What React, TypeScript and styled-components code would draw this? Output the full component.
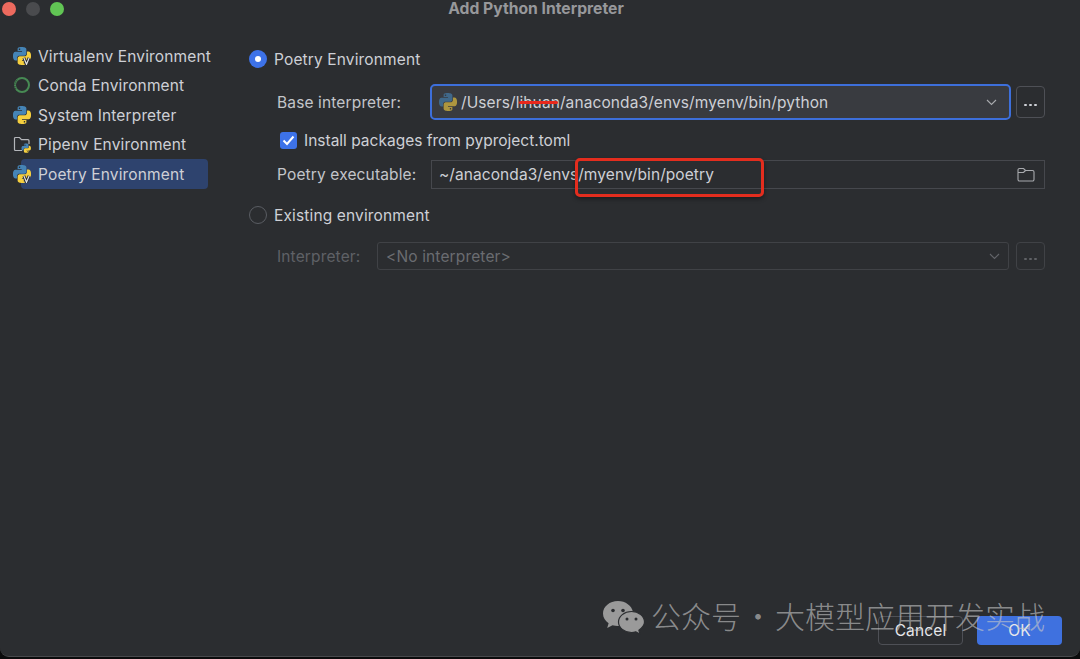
import React from "react";
import styled, { createGlobalStyle } from "styled-components";

const Global = createGlobalStyle`
  html, body { margin: 0; padding: 0; background: #0b0b0c; }
  body { font-family: Inter, "Noto Sans", sans-serif; }
  * { box-sizing: border-box; }
`;

const Page = styled.div`
  width: 1080px;
  height: 659px;
  overflow: hidden;
  position: relative;
  background: #0b0b0c;
`;
const Dialog = styled.div`
  height: 657px;
  display: flex;
  flex-direction: column;
  background: #2b2d30;
  border-bottom: 1.5px solid #48494c;
  border-radius: 0 0 9px 9px;
  color: #ced0d6;
  font-size: 15.5px;
  letter-spacing: 0.14px;
  -webkit-font-smoothing: antialiased;
`;
const TitleBar = styled.div`
  height: 17px;
  flex: none;
  display: flex;
  align-items: center;
  position: relative;
  padding-left: 2px;
  gap: 10px;
`;
const Light = styled.span<{ $c: string }>`
  width: 14px;
  height: 14px;
  border-radius: 50%;
  background: ${(p) => p.$c};
  flex: none;
`;
const Title = styled.div`
  position: absolute;
  left: 0;
  right: 0;
  margin-left: -8px;
  text-align: center;
  font-size: 15.7px;
  font-weight: 700;
  color: #97989b;
  top: 0;
  line-height: 17px;
  letter-spacing: 0;
`;
const Main = styled.div`
  flex: 1;
  display: flex;
  min-height: 0;
`;
const Sidebar = styled.div`
  width: 249px;
  flex: none;
  padding-top: 24px;
`;
const NavRow = styled.div<{ $sel?: boolean }>`
  height: 29.5px;
  display: flex;
  align-items: center;
  gap: 7px;
  padding-left: 13px;
  position: relative;
  z-index: 0;
  &::before {
    content: "";
    display: ${(p) => (p.$sel ? "block" : "none")};
    position: absolute;
    left: 21px;
    width: 187px;
    top: 0;
    bottom: 0;
    border-radius: 4px;
    background: #2e436e;
    z-index: -1;
  }
`;
const NavText = styled.span`
  padding-top: 1px;
`;
const NavIcon = styled.svg`
  width: 18px;
  height: 18px;
  flex: none;
`;
const Content = styled.div`
  flex: 1;
  padding: 30px 35px 0 0;
  display: flex;
  flex-direction: column;
`;
const RadioRow = styled.div<{ $mt?: number }>`
  height: 24px;
  margin-top: ${(p) => p.$mt ?? 0}px;
  display: flex;
  align-items: center;
  gap: 7px;
`;
const Radio = styled.span<{ $on?: boolean }>`
  width: 18px;
  height: 18px;
  border-radius: 50%;
  flex: none;
  display: flex;
  align-items: center;
  justify-content: center;
  background: ${(p) => (p.$on ? "#3d72e8" : "transparent")};
  border: ${(p) => (p.$on ? "none" : "1.5px solid #5a5d63")};
  &::after {
    content: "";
    display: ${(p) => (p.$on ? "block" : "none")};
    width: 6px;
    height: 6px;
    border-radius: 50%;
    background: #fff;
  }
`;
const FormRow = styled.div<{ $mt?: number; $h: number }>`
  height: ${(p) => p.$h}px;
  margin-top: ${(p) => p.$mt ?? 0}px;
  padding-left: 28px;
  display: flex;
  align-items: center;
  gap: 5px;
`;
const Label = styled.span<{ $w: number; $dim?: boolean }>`
  width: ${(p) => p.$w}px;
  flex: none;
  color: ${(p) => (p.$dim ? "#5f6166" : "#c3c5ca")};
`;
const Combo = styled.div`
  flex: 1;
  height: 36px;
  border: 2px solid #3d6fdb;
  border-radius: 5px;
  background: #393b40;
  display: flex;
  align-items: center;
  padding: 0 12px 0 7px;
  gap: 4px;
`;
const PathText = styled.span`
  flex: 1;
  white-space: nowrap;
  position: relative;
  letter-spacing: 0.1px;
`;
const Strike = styled.span`
  position: absolute;
  left: 58px;
  top: 8px;
  width: 39px;
  height: 3px;
  background: #e8281c;
  border-radius: 2px;
`;
const DotsBtn = styled.div<{ $dim?: boolean }>`
  width: 29px;
  height: ${(p) => (p.$dim ? 28 : 32)}px;
  flex: none;
  border: 1px solid ${(p) => (p.$dim ? "#404246" : "#4e5056")};
  border-radius: 4px;
  display: flex;
  align-items: center;
  justify-content: center;
  gap: 2.5px;
  padding-top: 6px;
`;
const Dot = styled.i<{ $dim?: boolean }>`
  width: 2.5px;
  height: 2.5px;
  border-radius: 50%;
  background: ${(p) => (p.$dim ? "#606266" : "#ced0d6")};
`;
const CheckRow = styled.div`
  height: 23px;
  margin-top: 8px;
  padding: 1px 0 0 31px;
  display: flex;
  align-items: center;
  gap: 7px;
  letter-spacing: 0;
`;
const Check = styled.span`
  width: 17px;
  height: 17px;
  flex: none;
  border-radius: 3px;
  background: #3d72e8;
  display: flex;
  align-items: center;
  justify-content: center;
`;
const PlainField = styled.div`
  flex: 1;
  height: 29px;
  border: 1px solid #46484d;
  display: flex;
  align-items: center;
  justify-content: space-between;
  padding: 0 9px 0 7px;
  letter-spacing: 0.08px;
`;
const DimField = styled.div`
  flex: 1;
  height: 28px;
  margin-right: 2px;
  border: 1px solid #404246;
  border-radius: 3px;
  display: flex;
  align-items: center;
  justify-content: space-between;
  padding: 0 8px;
  color: #6a6c71;
`;
const Footer = styled.div`
  flex: none;
  height: 29px;
  margin-bottom: 11px;
  padding-right: 18px;
  display: flex;
  justify-content: flex-end;
  gap: 14px;
`;
const Btn = styled.div<{ $primary?: boolean }>`
  width: 85px;
  height: 29px;
  border-radius: 4px;
  display: flex;
  align-items: center;
  justify-content: center;
  color: #e6e7ea;
  background: ${(p) => (p.$primary ? "#3f71df" : "transparent")};
  border: ${(p) => (p.$primary ? "none" : "1px solid #4e5056")};
`;
const RedBox = styled.div`
  position: absolute;
  left: 575px;
  top: 158px;
  width: 189px;
  height: 39px;
  border: 3px solid #e32d1e;
  border-radius: 5px;
  box-shadow: 0 2px 4px rgba(0, 0, 0, 0.4);
`;
const Watermark = styled.div`
  position: absolute;
  left: 603px;
  top: 596px;
  display: flex;
  align-items: center;
  gap: 6px;
  color: rgba(200, 200, 200, 0.62);
  font-family: "Noto Sans CJK SC", sans-serif;
  font-weight: 300;
  font-size: 30px;
  line-height: 38px;
  white-space: nowrap;
`;
const MarkText = styled.span`
  padding-bottom: 4px;
`;
const MarkDot = styled.span`
  margin: 0 2px;
`;

const BLUE_P =
  "M14.25.18l.9.2.73.26.59.3.45.32.34.34.25.34.16.33.1.3.04.26.02.2-.01.13V8.5l-.05.63-.13.55-.21.46-.26.38-.3.31-.33.25-.35.19-.35.14-.33.1-.3.07-.26.04-.21.02H8.77l-.69.05-.59.14-.5.22-.41.27-.33.32-.27.35-.2.36-.15.37-.1.35-.07.32-.04.27-.02.21v3.06H3.17l-.21-.03-.28-.07-.32-.12-.35-.18-.36-.26-.36-.36-.35-.46-.32-.59-.28-.73-.21-.88-.14-1.05-.05-1.23.06-1.22.16-1.04.24-.87.32-.71.36-.57.4-.44.42-.33.42-.24.4-.16.36-.1.32-.05.24-.01h.16l.06.01h8.16v-.83H6.18l-.01-2.75-.02-.37.05-.34.11-.31.17-.28.25-.26.31-.23.38-.2.44-.18.51-.15.58-.12.64-.1.71-.06.77-.04.84-.02 1.27.05zm-6.3 1.98l-.23.33-.08.41.08.41.23.34.33.22.41.09.41-.09.33-.22.23-.34.08-.41-.08-.41-.23-.33-.33-.22-.41-.09-.41.09z";
const YELLOW_P =
  "M21.04 6.11l.28.06.32.12.35.18.36.27.36.35.35.47.32.59.28.73.21.88.14 1.04.05 1.23-.06 1.23-.16 1.04-.24.86-.32.71-.36.57-.4.45-.42.33-.42.24-.4.16-.36.09-.32.05-.24.02-.16-.01h-8.22v.82h5.84l.01 2.76.02.36-.05.34-.11.31-.17.29-.25.25-.31.24-.38.2-.44.17-.51.15-.58.13-.64.09-.71.07-.77.04-.84.01-1.27-.04-1.07-.14-.9-.2-.73-.25-.59-.3-.45-.33-.34-.34-.25-.34-.16-.33-.1-.3-.04-.25-.02-.2.01-.13v-5.34l.05-.64.13-.54.21-.46.26-.38.3-.32.33-.24.35-.2.35-.14.33-.1.3-.06.26-.04.21-.02.13-.01h5.84l.69-.05.59-.14.5-.21.41-.28.33-.32.27-.35.2-.36.15-.36.1-.35.07-.32.04-.28.02-.21V6.07h2.09l.14.01zm-6.47 14.25l-.23.33-.08.41.08.41.23.33.33.23.41.08.41-.08.33-.23.23-.33.08-.41-.08-.41-.23-.33-.33-.23-.41-.08-.41.08z";

const Snake = ({ dim }: { dim?: boolean }) => (
  <g fillRule="evenodd" opacity={dim ? 0.62 : 1}>
    <path d={BLUE_P} fill="#4584b6" />
    <path d={YELLOW_P} fill="#f5cf3f" />
  </g>
);

const PyIcon = ({ v, dim }: { v?: boolean; dim?: boolean }) => (
  <NavIcon viewBox="0 0 24 24">
    <Snake dim={dim} />
    {v && (
      <>
        <path d="M14.5 14.5l3.5 8.5 3.5-8.5" fill="none" stroke="#2b2d30" strokeWidth="4" />
        <path d="M14.5 14.5l3.5 8.5 3.5-8.5" fill="none" stroke="#e4e5e8" strokeWidth="1.6" />
      </>
    )}
  </NavIcon>
);

const CondaIcon = () => (
  <NavIcon viewBox="0 0 18 18">
    <circle cx="9" cy="9" r="7" fill="none" stroke="#478a54" strokeWidth="2" />
    <path d="M3 13A7 7 0 0 1 4.5 3.6" fill="none" stroke="#2b2d30" strokeWidth="1" strokeDasharray="1 1.2" />
  </NavIcon>
);

const PipIcon = () => (
  <NavIcon viewBox="0 0 18 18">
    <path
      d="M1.5 14.5V3.5a1 1 0 0 1 1-1h4l2 2.2h6.500a1 1 0 0 1 1 1V9M9 15.500H2.500a1 1 0 0 1-1-1"
      fill="none"
      stroke="#b4b6ba"
      strokeWidth="1.2"
    />
    <g transform="translate(8.500 8.500) scale(0.39)">
      <Snake />
    </g>
  </NavIcon>
);

const Chevron = ({ dim }: { dim?: boolean }) => (
  <svg width="11" height="7" viewBox="0 0 11 7">
    <path d="M1 1l4.500 4.500L10 1" fill="none" stroke={dim ? "#63656a" : "#a8aaae"} strokeWidth="1.100" />
  </svg>
);

const FolderIcon = () => (
  <svg width="18" height="15" viewBox="0 0 18 15">
    <path
      d="M1 3a1.500 1.500 0 0 1 1.500-1.500h4l2 2h7A1.500 1.500 0 0 1 17 5v7.500a1.500 1.500 0 0 1-1.500 1.500h-13A1.500 1.500 0 0 1 1 12.500zM8.500 3.500L6.500 5.500H1"
      fill="none"
      stroke="#a8aaae"
      strokeWidth="1.100"
    />
  </svg>
);

const WeChat = () => (
  <svg width="42" height="36" viewBox="0 0 42 36">
    <path d="M15 2C6.700 2 0 7.500 0 14.500c0 4 2.200 7.400 5.600 9.700L4.200 29l5.300-2.800c1.900.5 3.600.8 5.500.8 1 0 1.500 0 2.500-.2C23 20 24 14 30 13 28.800 6.700 22.500 2 15 2z" fill="#9a9a9a" />
    <circle cx="10" cy="11.500" r="1.800" fill="#2b2d30" />
    <circle cx="20" cy="11.500" r="1.800" fill="#2b2d30" />
    <path d="M28.500 12.500c-7.200 0-13 4.800-13 10.500s5.800 10.500 13 10.500c1.500 0 3-.3 4.400-.7l4.100 2.500-1.100-4C39 29 41.500 26.200 41.500 23c0-5.700-5.800-10.500-13-10.500z" fill="#9a9a9a" stroke="#2b2d30" strokeWidth="1.200" />
    <circle cx="24" cy="20" r="1.500" fill="#2b2d30" />
    <circle cx="33" cy="20" r="1.500" fill="#2b2d30" />
  </svg>
);

const nav: { label: string; icon: React.ReactNode; sel?: boolean }[] = [
  { label: "Virtualenv Environment", icon: <PyIcon v /> },
  { label: "Conda Environment", icon: <CondaIcon /> },
  { label: "System Interpreter", icon: <PyIcon /> },
  { label: "Pipenv Environment", icon: <PipIcon /> },
  { label: "Poetry Environment", icon: <PyIcon v />, sel: true },
];

export default function App() {
  return (
    <Page>
      <Global />
      <Dialog>
        <TitleBar>
          <Light $c="#ed6a5e" />
          <Light $c="#4a4b4e" />
          <Light $c="#61c554" />
          <Title>Add Python Interpreter</Title>
        </TitleBar>
        <Main>
          <Sidebar>
            {nav.map((n) => (
              <NavRow key={n.label} $sel={n.sel}>
                {n.icon}
                <NavText>{n.label}</NavText>
              </NavRow>
            ))}
          </Sidebar>
          <Content>
            <RadioRow>
              <Radio $on />
              <span>Poetry Environment</span>
            </RadioRow>
            <FormRow $h={36} $mt={13}>
              <Label $w={148}>Base interpreter:</Label>
              <Combo>
                <PyIcon dim />
                <PathText>
                  /Users/lihuan/anaconda3/envs/myenv/bin/python
                  <Strike />
                </PathText>
                <Chevron />
              </Combo>
              <DotsBtn>
                <Dot />
                <Dot />
                <Dot />
              </DotsBtn>
            </FormRow>
            <CheckRow>
              <Check>
                <svg width="13" height="11" viewBox="0 0 13 11">
                  <path d="M1.500 5.500L5 9l6.500-7.500" fill="none" stroke="#fff" strokeWidth="2" />
                </svg>
              </Check>
              <span>Install packages from pyproject.toml</span>
            </CheckRow>
            <FormRow $h={29} $mt={9}>
              <Label $w={149}>Poetry executable:</Label>
              <PlainField>
                <span>~/anaconda3/envs/myenv/bin/poetry</span>
                <FolderIcon />
              </PlainField>
            </FormRow>
            <RadioRow $mt={14}>
              <Radio />
              <span>Existing environment</span>
            </RadioRow>
            <FormRow $h={28} $mt={15}>
              <Label $w={95} $dim>
                Interpreter:
              </Label>
              <DimField>
                <span>&lt;No interpreter&gt;</span>
                <Chevron dim />
              </DimField>
              <DotsBtn $dim>
                <Dot $dim />
                <Dot $dim />
                <Dot $dim />
              </DotsBtn>
            </FormRow>
          </Content>
        </Main>
        <Footer>
          <Btn>Cancel</Btn>
          <Btn $primary>OK</Btn>
        </Footer>
      </Dialog>
      <RedBox />
      <Watermark>
        <WeChat />
        <MarkText>
          公众号<MarkDot>·</MarkDot>大模型应用开发实战
        </MarkText>
      </Watermark>
    </Page>
  );
}
